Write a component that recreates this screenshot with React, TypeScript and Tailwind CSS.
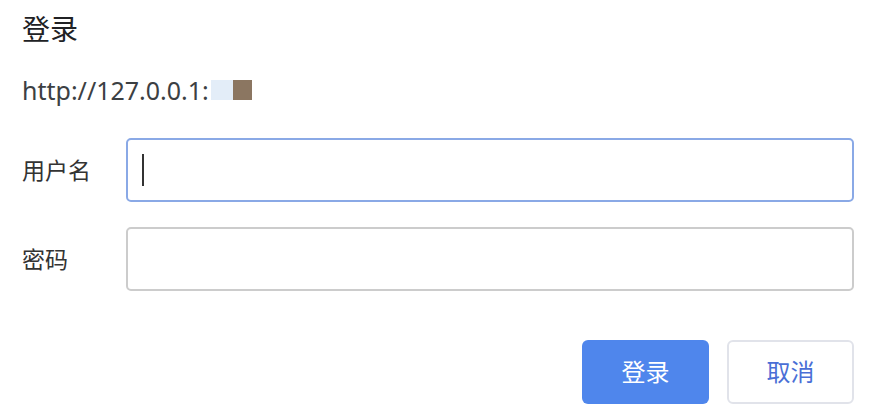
import React from 'react';

const cjk = "font-['Noto_Sans','Noto_Sans_CJK_SC',sans-serif]";

const Field = ({ label, focused }: { label: string; focused?: boolean }) => (
    <div className="flex items-center">
        <div className="w-[104px] text-[23px] leading-[28px] text-[#333333]">{label}</div>
        <div
            className={`flex-1 h-[64px] rounded-[5px] border-2 flex items-center pl-[14px] ${
                focused ? 'border-[#8aa9e6]' : 'border-[#cccccc]'
            }`}
        >
            {focused && <span className="w-[2px] h-[32px] bg-[#333333]"></span>}
        </div>
    </div>
);

export default function App() {
    return (
        <div className={`w-[874px] h-[408px] bg-white pl-[22px] pr-[20px] ${cjk}`}>
            <div className="pt-[13px] text-[28px] leading-[32px] text-[#202124]">登录</div>
            <div className="mt-[33px] h-[24px] flex items-center text-[25px] leading-[24px] text-[#3c4043]">
                <span>http://127.0.0.1:</span>
                <span className="ml-[2px] w-[22px] h-[20px] bg-[#e3edf8]"></span>
                <span className="w-[19px] h-[20px] bg-[#8b7661]"></span>
            </div>
            <div className="mt-[36px] flex flex-col gap-[25px]">
                <Field label="用户名" focused />
                <Field label="密码" />
            </div>
            <div className="mt-[49px] flex justify-end gap-[18px]">
                <button className="w-[127px] h-[64px] rounded-[6px] bg-[#4f86ec] text-white text-[24px]">登录</button>
                <button className="w-[127px] h-[64px] rounded-[6px] bg-white border-2 border-[#e1e3ea] text-[#4a6fd6] text-[24px]">取消</button>
            </div>
        </div>
    );
}
